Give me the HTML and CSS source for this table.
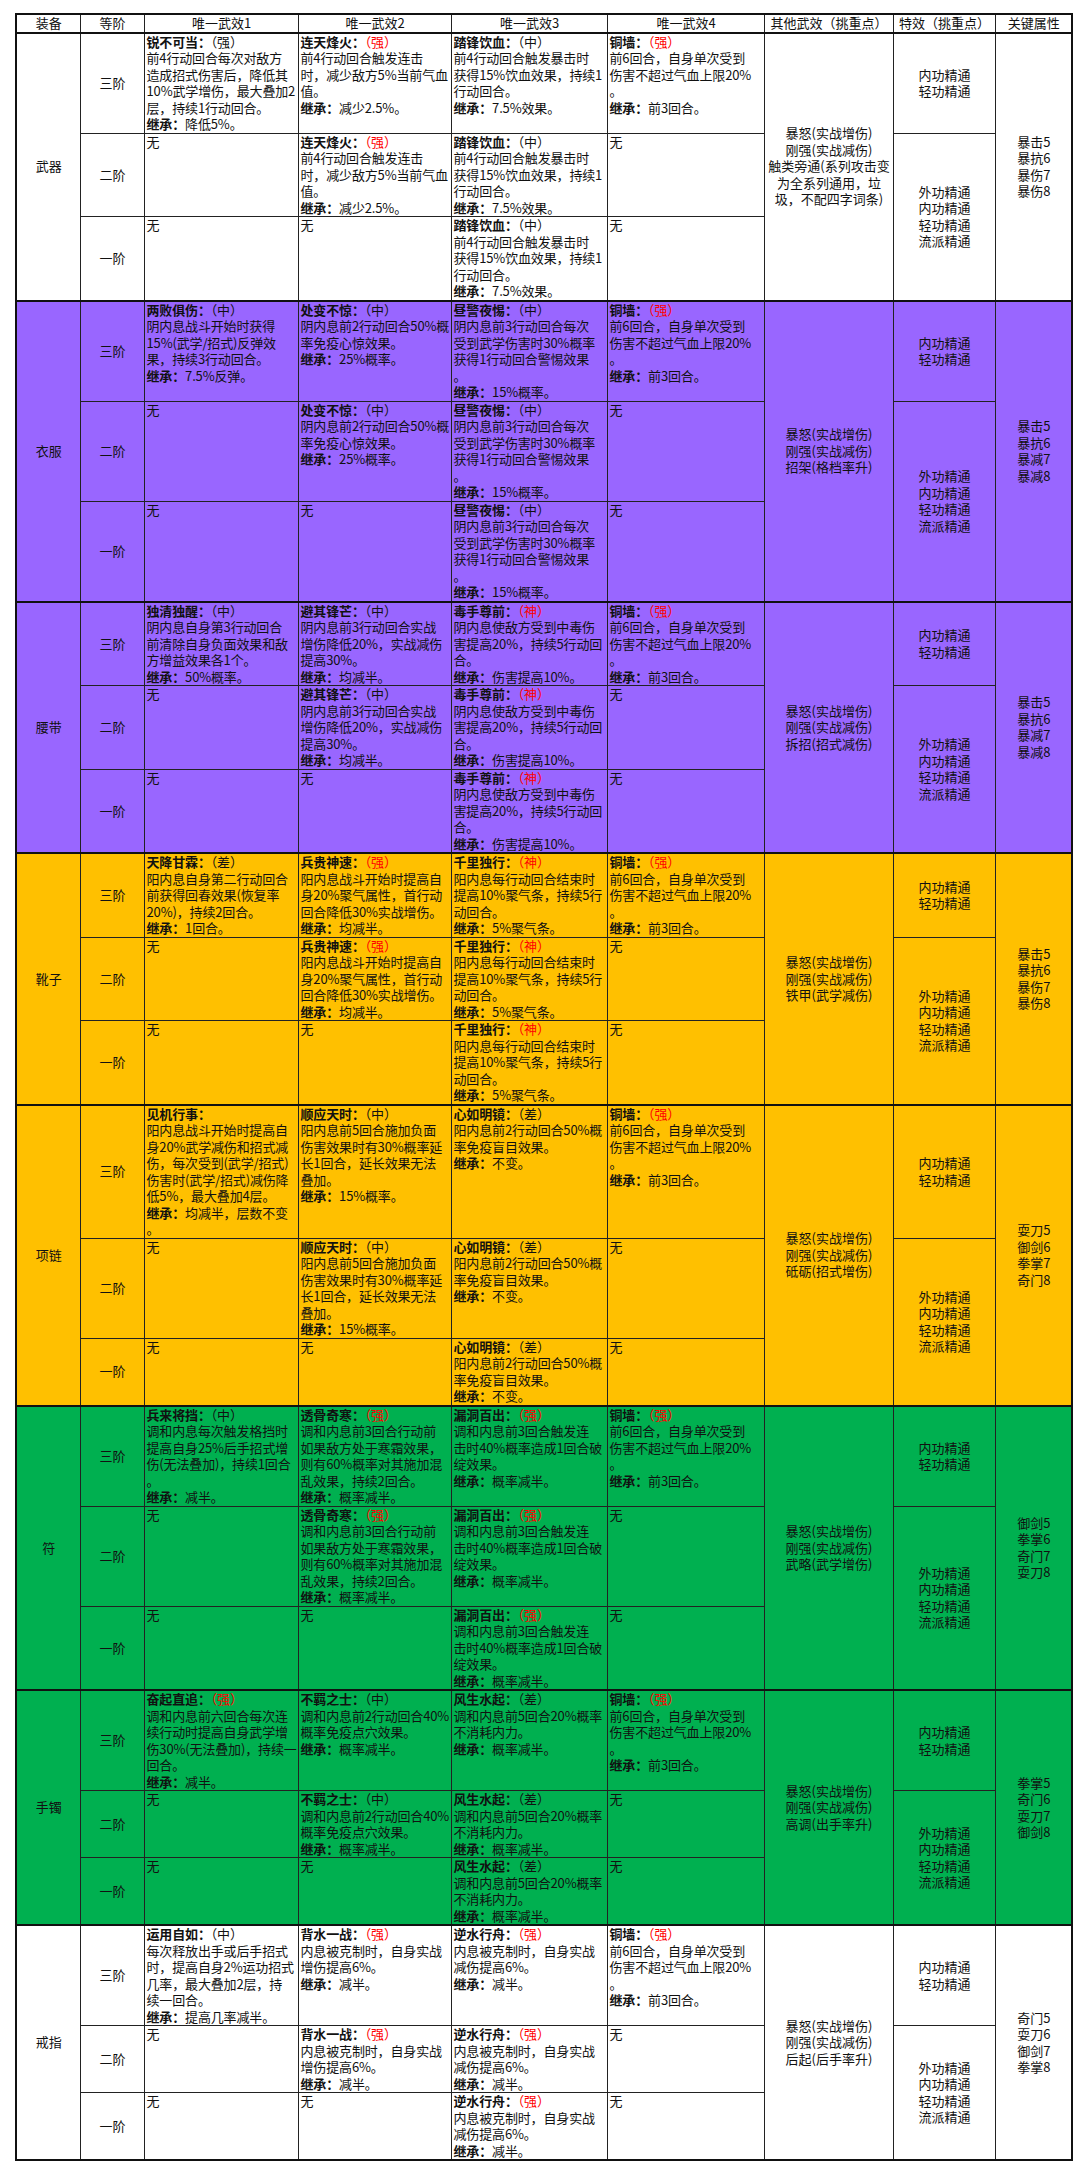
FILE: index.html
```html
<!DOCTYPE html>
<html lang="zh-CN">
<head>
<meta charset="utf-8">
<title>装备武效</title>
<link rel="stylesheet" href="styles.css">
</head>
<body>
<table class="sheet">
<colgroup>
<col class="w-eq"><col class="w-lv"><col class="w-u1"><col class="w-u2"><col class="w-u3"><col class="w-u4"><col class="w-ot"><col class="w-fx"><col class="w-key">
</colgroup>
<thead>
<tr><th>装备</th><th>等阶</th><th>唯一武效1</th><th>唯一武效2</th><th>唯一武效3</th><th>唯一武效4</th><th>其他武效（挑重点）</th><th>特效（挑重点）</th><th>关键属性</th></tr>
</thead>

<tbody class="sec white">
<tr>
<td class="c" rowspan="3">武器</td>
<td class="c">三阶</td>
<td class="u"><b>锐不可当：</b>（强）<br>前4行动回合每次对敌方<br>造成招式伤害后，降低其<br>10%武学增伤，最大叠加2<br>层，持续1行动回合。<br><b>继承：</b>降低5%。</td>
<td class="u"><b>连天烽火：</b><span class="r">（强）</span><br>前4行动回合触发连击<br>时，减少敌方5%当前气血<br>值。<br><b>继承：</b>减少2.5%。</td>
<td class="u"><b>踏锋饮血：</b>（中）<br>前4行动回合触发暴击时<br>获得15%饮血效果，持续1<br>行动回合。<br><b>继承：</b>7.5%效果。</td>
<td class="u"><b>铜墙：</b><span class="r">（强）</span><br>前6回合，自身单次受到<br>伤害不超过气血上限20%<br>。<br><b>继承：</b>前3回合。</td>
<td class="c" rowspan="3">暴怒(实战增伤)<br>刚强(实战减伤)<br>触类旁通(系列攻击变<br>为全系列通用，垃<br>圾，不配四字词条)</td>
<td class="c">内功精通<br>轻功精通</td>
<td class="c" rowspan="3">暴击5<br>暴抗6<br>暴伤7<br>暴伤8</td>
</tr>
<tr>
<td class="c">二阶</td>
<td class="u">无</td>
<td class="u"><b>连天烽火：</b><span class="r">（强）</span><br>前4行动回合触发连击<br>时，减少敌方5%当前气血<br>值。<br><b>继承：</b>减少2.5%。</td>
<td class="u"><b>踏锋饮血：</b>（中）<br>前4行动回合触发暴击时<br>获得15%饮血效果，持续1<br>行动回合。<br><b>继承：</b>7.5%效果。</td>
<td class="u">无</td>
<td class="c" rowspan="2">外功精通<br>内功精通<br>轻功精通<br>流派精通</td>
</tr>
<tr>
<td class="c">一阶</td>
<td class="u">无</td>
<td class="u">无</td>
<td class="u"><b>踏锋饮血：</b>（中）<br>前4行动回合触发暴击时<br>获得15%饮血效果，持续1<br>行动回合。<br><b>继承：</b>7.5%效果。</td>
<td class="u">无</td>
</tr>
</tbody>

<tbody class="sec purple">
<tr>
<td class="c" rowspan="3">衣服</td>
<td class="c">三阶</td>
<td class="u"><b>两败俱伤：</b>（中）<br>阴内息战斗开始时获得<br>15%(武学/招式)反弹效<br>果，持续3行动回合。<br><b>继承：</b>7.5%反弹。</td>
<td class="u"><b>处变不惊：</b>（中）<br>阴内息前2行动回合50%概<br>率免疫心惊效果。<br><b>继承：</b>25%概率。</td>
<td class="u"><b>昼警夜惕：</b>（中）<br>阴内息前3行动回合每次<br>受到武学伤害时30%概率<br>获得1行动回合警惕效果<br>。<br><b>继承：</b>15%概率。</td>
<td class="u"><b>铜墙：</b><span class="r">（强）</span><br>前6回合，自身单次受到<br>伤害不超过气血上限20%<br>。<br><b>继承：</b>前3回合。</td>
<td class="c" rowspan="3">暴怒(实战增伤)<br>刚强(实战减伤)<br>招架(格档率升)</td>
<td class="c">内功精通<br>轻功精通</td>
<td class="c" rowspan="3">暴击5<br>暴抗6<br>暴减7<br>暴减8</td>
</tr>
<tr>
<td class="c">二阶</td>
<td class="u">无</td>
<td class="u"><b>处变不惊：</b>（中）<br>阴内息前2行动回合50%概<br>率免疫心惊效果。<br><b>继承：</b>25%概率。</td>
<td class="u"><b>昼警夜惕：</b>（中）<br>阴内息前3行动回合每次<br>受到武学伤害时30%概率<br>获得1行动回合警惕效果<br>。<br><b>继承：</b>15%概率。</td>
<td class="u">无</td>
<td class="c" rowspan="2">外功精通<br>内功精通<br>轻功精通<br>流派精通</td>
</tr>
<tr>
<td class="c">一阶</td>
<td class="u">无</td>
<td class="u">无</td>
<td class="u"><b>昼警夜惕：</b>（中）<br>阴内息前3行动回合每次<br>受到武学伤害时30%概率<br>获得1行动回合警惕效果<br>。<br><b>继承：</b>15%概率。</td>
<td class="u">无</td>
</tr>
</tbody>

<tbody class="sec purple">
<tr>
<td class="c" rowspan="3">腰带</td>
<td class="c">三阶</td>
<td class="u"><b>独清独醒：</b>（中）<br>阴内息自身第3行动回合<br>前清除自身负面效果和敌<br>方增益效果各1个。<br><b>继承：</b>50%概率。</td>
<td class="u"><b>避其锋芒：</b>（中）<br>阴内息前3行动回合实战<br>增伤降低20%，实战减伤<br>提高30%。<br><b>继承：</b>均减半。</td>
<td class="u"><b>毒手尊前：</b><span class="r">（神）</span><br>阴内息使敌方受到中毒伤<br>害提高20%，持续5行动回<br>合。<br><b>继承：</b>伤害提高10%。</td>
<td class="u"><b>铜墙：</b><span class="r">（强）</span><br>前6回合，自身单次受到<br>伤害不超过气血上限20%<br>。<br><b>继承：</b>前3回合。</td>
<td class="c" rowspan="3">暴怒(实战增伤)<br>刚强(实战减伤)<br>拆招(招式减伤)</td>
<td class="c">内功精通<br>轻功精通</td>
<td class="c" rowspan="3">暴击5<br>暴抗6<br>暴减7<br>暴减8</td>
</tr>
<tr>
<td class="c">二阶</td>
<td class="u">无</td>
<td class="u"><b>避其锋芒：</b>（中）<br>阴内息前3行动回合实战<br>增伤降低20%，实战减伤<br>提高30%。<br><b>继承：</b>均减半。</td>
<td class="u"><b>毒手尊前：</b><span class="r">（神）</span><br>阴内息使敌方受到中毒伤<br>害提高20%，持续5行动回<br>合。<br><b>继承：</b>伤害提高10%。</td>
<td class="u">无</td>
<td class="c" rowspan="2">外功精通<br>内功精通<br>轻功精通<br>流派精通</td>
</tr>
<tr>
<td class="c">一阶</td>
<td class="u">无</td>
<td class="u">无</td>
<td class="u"><b>毒手尊前：</b><span class="r">（神）</span><br>阴内息使敌方受到中毒伤<br>害提高20%，持续5行动回<br>合。<br><b>继承：</b>伤害提高10%。</td>
<td class="u">无</td>
</tr>
</tbody>

<tbody class="sec gold">
<tr>
<td class="c" rowspan="3">靴子</td>
<td class="c">三阶</td>
<td class="u"><b>天降甘霖：</b>（差）<br>阳内息自身第二行动回合<br>前获得回春效果(恢复率<br>20%)，持续2回合。<br><b>继承：</b>1回合。</td>
<td class="u"><b>兵贵神速：</b><span class="r">（强）</span><br>阳内息战斗开始时提高自<br>身20%聚气属性，首行动<br>回合降低30%实战增伤。<br><b>继承：</b>均减半。</td>
<td class="u"><b>千里独行：</b><span class="r">（神）</span><br>阳内息每行动回合结束时<br>提高10%聚气条，持续5行<br>动回合。<br><b>继承：</b>5%聚气条。</td>
<td class="u"><b>铜墙：</b><span class="r">（强）</span><br>前6回合，自身单次受到<br>伤害不超过气血上限20%<br>。<br><b>继承：</b>前3回合。</td>
<td class="c" rowspan="3">暴怒(实战增伤)<br>刚强(实战减伤)<br>铁甲(武学减伤)</td>
<td class="c">内功精通<br>轻功精通</td>
<td class="c" rowspan="3">暴击5<br>暴抗6<br>暴伤7<br>暴伤8</td>
</tr>
<tr>
<td class="c">二阶</td>
<td class="u">无</td>
<td class="u"><b>兵贵神速：</b><span class="r">（强）</span><br>阳内息战斗开始时提高自<br>身20%聚气属性，首行动<br>回合降低30%实战增伤。<br><b>继承：</b>均减半。</td>
<td class="u"><b>千里独行：</b><span class="r">（神）</span><br>阳内息每行动回合结束时<br>提高10%聚气条，持续5行<br>动回合。<br><b>继承：</b>5%聚气条。</td>
<td class="u">无</td>
<td class="c" rowspan="2">外功精通<br>内功精通<br>轻功精通<br>流派精通</td>
</tr>
<tr>
<td class="c">一阶</td>
<td class="u">无</td>
<td class="u">无</td>
<td class="u"><b>千里独行：</b><span class="r">（神）</span><br>阳内息每行动回合结束时<br>提高10%聚气条，持续5行<br>动回合。<br><b>继承：</b>5%聚气条。</td>
<td class="u">无</td>
</tr>
</tbody>

<tbody class="sec gold">
<tr>
<td class="c" rowspan="3">项链</td>
<td class="c">三阶</td>
<td class="u"><b>见机行事：</b><br>阳内息战斗开始时提高自<br>身20%武学减伤和招式减<br>伤，每次受到(武学/招式)<br>伤害时(武学/招式)减伤降<br>低5%，最大叠加4层。<br><b>继承：</b>均减半，层数不变<br>。</td>
<td class="u"><b>顺应天时：</b>（中）<br>阳内息前5回合施加负面<br>伤害效果时有30%概率延<br>长1回合，延长效果无法<br>叠加。<br><b>继承：</b>15%概率。</td>
<td class="u"><b>心如明镜：</b>（差）<br>阳内息前2行动回合50%概<br>率免疫盲目效果。<br><b>继承：</b>不变。</td>
<td class="u"><b>铜墙：</b><span class="r">（强）</span><br>前6回合，自身单次受到<br>伤害不超过气血上限20%<br>。<br><b>继承：</b>前3回合。</td>
<td class="c" rowspan="3">暴怒(实战增伤)<br>刚强(实战减伤)<br>砥砺(招式增伤)</td>
<td class="c">内功精通<br>轻功精通</td>
<td class="c" rowspan="3">耍刀5<br>御剑6<br>拳掌7<br>奇门8</td>
</tr>
<tr>
<td class="c">二阶</td>
<td class="u">无</td>
<td class="u"><b>顺应天时：</b>（中）<br>阳内息前5回合施加负面<br>伤害效果时有30%概率延<br>长1回合，延长效果无法<br>叠加。<br><b>继承：</b>15%概率。</td>
<td class="u"><b>心如明镜：</b>（差）<br>阳内息前2行动回合50%概<br>率免疫盲目效果。<br><b>继承：</b>不变。</td>
<td class="u">无</td>
<td class="c" rowspan="2">外功精通<br>内功精通<br>轻功精通<br>流派精通</td>
</tr>
<tr>
<td class="c">一阶</td>
<td class="u">无</td>
<td class="u">无</td>
<td class="u"><b>心如明镜：</b>（差）<br>阳内息前2行动回合50%概<br>率免疫盲目效果。<br><b>继承：</b>不变。</td>
<td class="u">无</td>
</tr>
</tbody>

<tbody class="sec green">
<tr>
<td class="c" rowspan="3">符</td>
<td class="c">三阶</td>
<td class="u"><b>兵来将挡：</b>（中）<br>调和内息每次触发格挡时<br>提高自身25%后手招式增<br>伤(无法叠加)，持续1回合<br>。<br><b>继承：</b>减半。</td>
<td class="u"><b>透骨奇寒：</b><span class="r">（强）</span><br>调和内息前3回合行动前<br>如果敌方处于寒霜效果，<br>则有60%概率对其施加混<br>乱效果，持续2回合。<br><b>继承：</b>概率减半。</td>
<td class="u"><b>漏洞百出：</b><span class="r">（强）</span><br>调和内息前3回合触发连<br>击时40%概率造成1回合破<br>绽效果。<br><b>继承：</b>概率减半。</td>
<td class="u"><b>铜墙：</b><span class="r">（强）</span><br>前6回合，自身单次受到<br>伤害不超过气血上限20%<br>。<br><b>继承：</b>前3回合。</td>
<td class="c" rowspan="3">暴怒(实战增伤)<br>刚强(实战减伤)<br>武略(武学增伤)</td>
<td class="c">内功精通<br>轻功精通</td>
<td class="c" rowspan="3">御剑5<br>拳掌6<br>奇门7<br>耍刀8</td>
</tr>
<tr>
<td class="c">二阶</td>
<td class="u">无</td>
<td class="u"><b>透骨奇寒：</b><span class="r">（强）</span><br>调和内息前3回合行动前<br>如果敌方处于寒霜效果，<br>则有60%概率对其施加混<br>乱效果，持续2回合。<br><b>继承：</b>概率减半。</td>
<td class="u"><b>漏洞百出：</b><span class="r">（强）</span><br>调和内息前3回合触发连<br>击时40%概率造成1回合破<br>绽效果。<br><b>继承：</b>概率减半。</td>
<td class="u">无</td>
<td class="c" rowspan="2">外功精通<br>内功精通<br>轻功精通<br>流派精通</td>
</tr>
<tr>
<td class="c">一阶</td>
<td class="u">无</td>
<td class="u">无</td>
<td class="u"><b>漏洞百出：</b><span class="r">（强）</span><br>调和内息前3回合触发连<br>击时40%概率造成1回合破<br>绽效果。<br><b>继承：</b>概率减半。</td>
<td class="u">无</td>
</tr>
</tbody>

<tbody class="sec green">
<tr>
<td class="c" rowspan="3">手镯</td>
<td class="c">三阶</td>
<td class="u"><b>奋起直追：</b><span class="r">（强）</span><br>调和内息前六回合每次连<br>续行动时提高自身武学增<br>伤30%(无法叠加)，持续一<br>回合。<br><b>继承：</b>减半。</td>
<td class="u"><b>不羁之士：</b>（中）<br>调和内息前2行动回合40%<br>概率免疫点穴效果。<br><b>继承：</b>概率减半。</td>
<td class="u"><b>风生水起：</b>（差）<br>调和内息前5回合20%概率<br>不消耗内力。<br><b>继承：</b>概率减半。</td>
<td class="u"><b>铜墙：</b><span class="r">（强）</span><br>前6回合，自身单次受到<br>伤害不超过气血上限20%<br>。<br><b>继承：</b>前3回合。</td>
<td class="c" rowspan="3">暴怒(实战增伤)<br>刚强(实战减伤)<br>高调(出手率升)</td>
<td class="c">内功精通<br>轻功精通</td>
<td class="c" rowspan="3">拳掌5<br>奇门6<br>耍刀7<br>御剑8</td>
</tr>
<tr>
<td class="c">二阶</td>
<td class="u">无</td>
<td class="u"><b>不羁之士：</b>（中）<br>调和内息前2行动回合40%<br>概率免疫点穴效果。<br><b>继承：</b>概率减半。</td>
<td class="u"><b>风生水起：</b>（差）<br>调和内息前5回合20%概率<br>不消耗内力。<br><b>继承：</b>概率减半。</td>
<td class="u">无</td>
<td class="c" rowspan="2">外功精通<br>内功精通<br>轻功精通<br>流派精通</td>
</tr>
<tr>
<td class="c">一阶</td>
<td class="u">无</td>
<td class="u">无</td>
<td class="u"><b>风生水起：</b>（差）<br>调和内息前5回合20%概率<br>不消耗内力。<br><b>继承：</b>概率减半。</td>
<td class="u">无</td>
</tr>
</tbody>

<tbody class="sec white">
<tr>
<td class="c" rowspan="3">戒指</td>
<td class="c">三阶</td>
<td class="u"><b>运用自如：</b>（中）<br>每次释放出手或后手招式<br>时，提高自身2%运功招式<br>几率，最大叠加2层，持<br>续一回合。<br><b>继承：</b>提高几率减半。</td>
<td class="u"><b>背水一战：</b><span class="r">（强）</span><br>内息被克制时，自身实战<br>增伤提高6%。<br><b>继承：</b>减半。</td>
<td class="u"><b>逆水行舟：</b><span class="r">（强）</span><br>内息被克制时，自身实战<br>减伤提高6%。<br><b>继承：</b>减半。</td>
<td class="u"><b>铜墙：</b><span class="r">（强）</span><br>前6回合，自身单次受到<br>伤害不超过气血上限20%<br>。<br><b>继承：</b>前3回合。</td>
<td class="c" rowspan="3">暴怒(实战增伤)<br>刚强(实战减伤)<br>后起(后手率升)</td>
<td class="c">内功精通<br>轻功精通</td>
<td class="c" rowspan="3">奇门5<br>耍刀6<br>御剑7<br>拳掌8</td>
</tr>
<tr>
<td class="c">二阶</td>
<td class="u">无</td>
<td class="u"><b>背水一战：</b><span class="r">（强）</span><br>内息被克制时，自身实战<br>增伤提高6%。<br><b>继承：</b>减半。</td>
<td class="u"><b>逆水行舟：</b><span class="r">（强）</span><br>内息被克制时，自身实战<br>减伤提高6%。<br><b>继承：</b>减半。</td>
<td class="u">无</td>
<td class="c" rowspan="2">外功精通<br>内功精通<br>轻功精通<br>流派精通</td>
</tr>
<tr>
<td class="c">一阶</td>
<td class="u">无</td>
<td class="u">无</td>
<td class="u"><b>逆水行舟：</b><span class="r">（强）</span><br>内息被克制时，自身实战<br>减伤提高6%。<br><b>继承：</b>减半。</td>
<td class="u">无</td>
</tr>
</tbody>
</table>
</body>
</html>
```

FILE: styles.css
```css
html, body {
  margin: 0;
  padding: 0;
  background: #ffffff;
}

body {
  font-family: "Noto Sans CJK SC", "Noto Sans", sans-serif;
  font-size: 13px;
  color: #111111;
}

.sheet {
  border-collapse: collapse;
  table-layout: fixed;
  width: 1056px;
  margin: 13px 0 0 15px;
  border: 2px solid #111111;
}

.w-eq { width: 64px; }
.w-lv { width: 64px; }
.w-u1 { width: 154px; }
.w-u2 { width: 153px; }
.w-u3 { width: 156px; }
.w-u4 { width: 157px; }
.w-ot { width: 129px; }
.w-fx { width: 102px; }
.w-key { width: 77px; }

th, td {
  border: 1px solid #222222;
  padding: 0 1px 0 2px;
  line-height: 16.5px;
  white-space: nowrap;
  overflow: hidden;
}

.u {
  text-align: left;
  vertical-align: top;
  letter-spacing: -0.15px;
}

th {
  font-weight: normal;
  text-align: center;
  vertical-align: middle;
  background: #ffffff;
  border-bottom: 2px solid #111111;
}

.c {
  text-align: center;
  vertical-align: middle;
}

.sec {
  border-top: 2px solid #111111;
}

.white { background: #ffffff; }
.purple { background: #9966ff; }
.gold { background: #ffc000; }
.green { background: #00b050; }

b {
  font-weight: bold;
}

.r {
  color: #ff0000;
}
```
